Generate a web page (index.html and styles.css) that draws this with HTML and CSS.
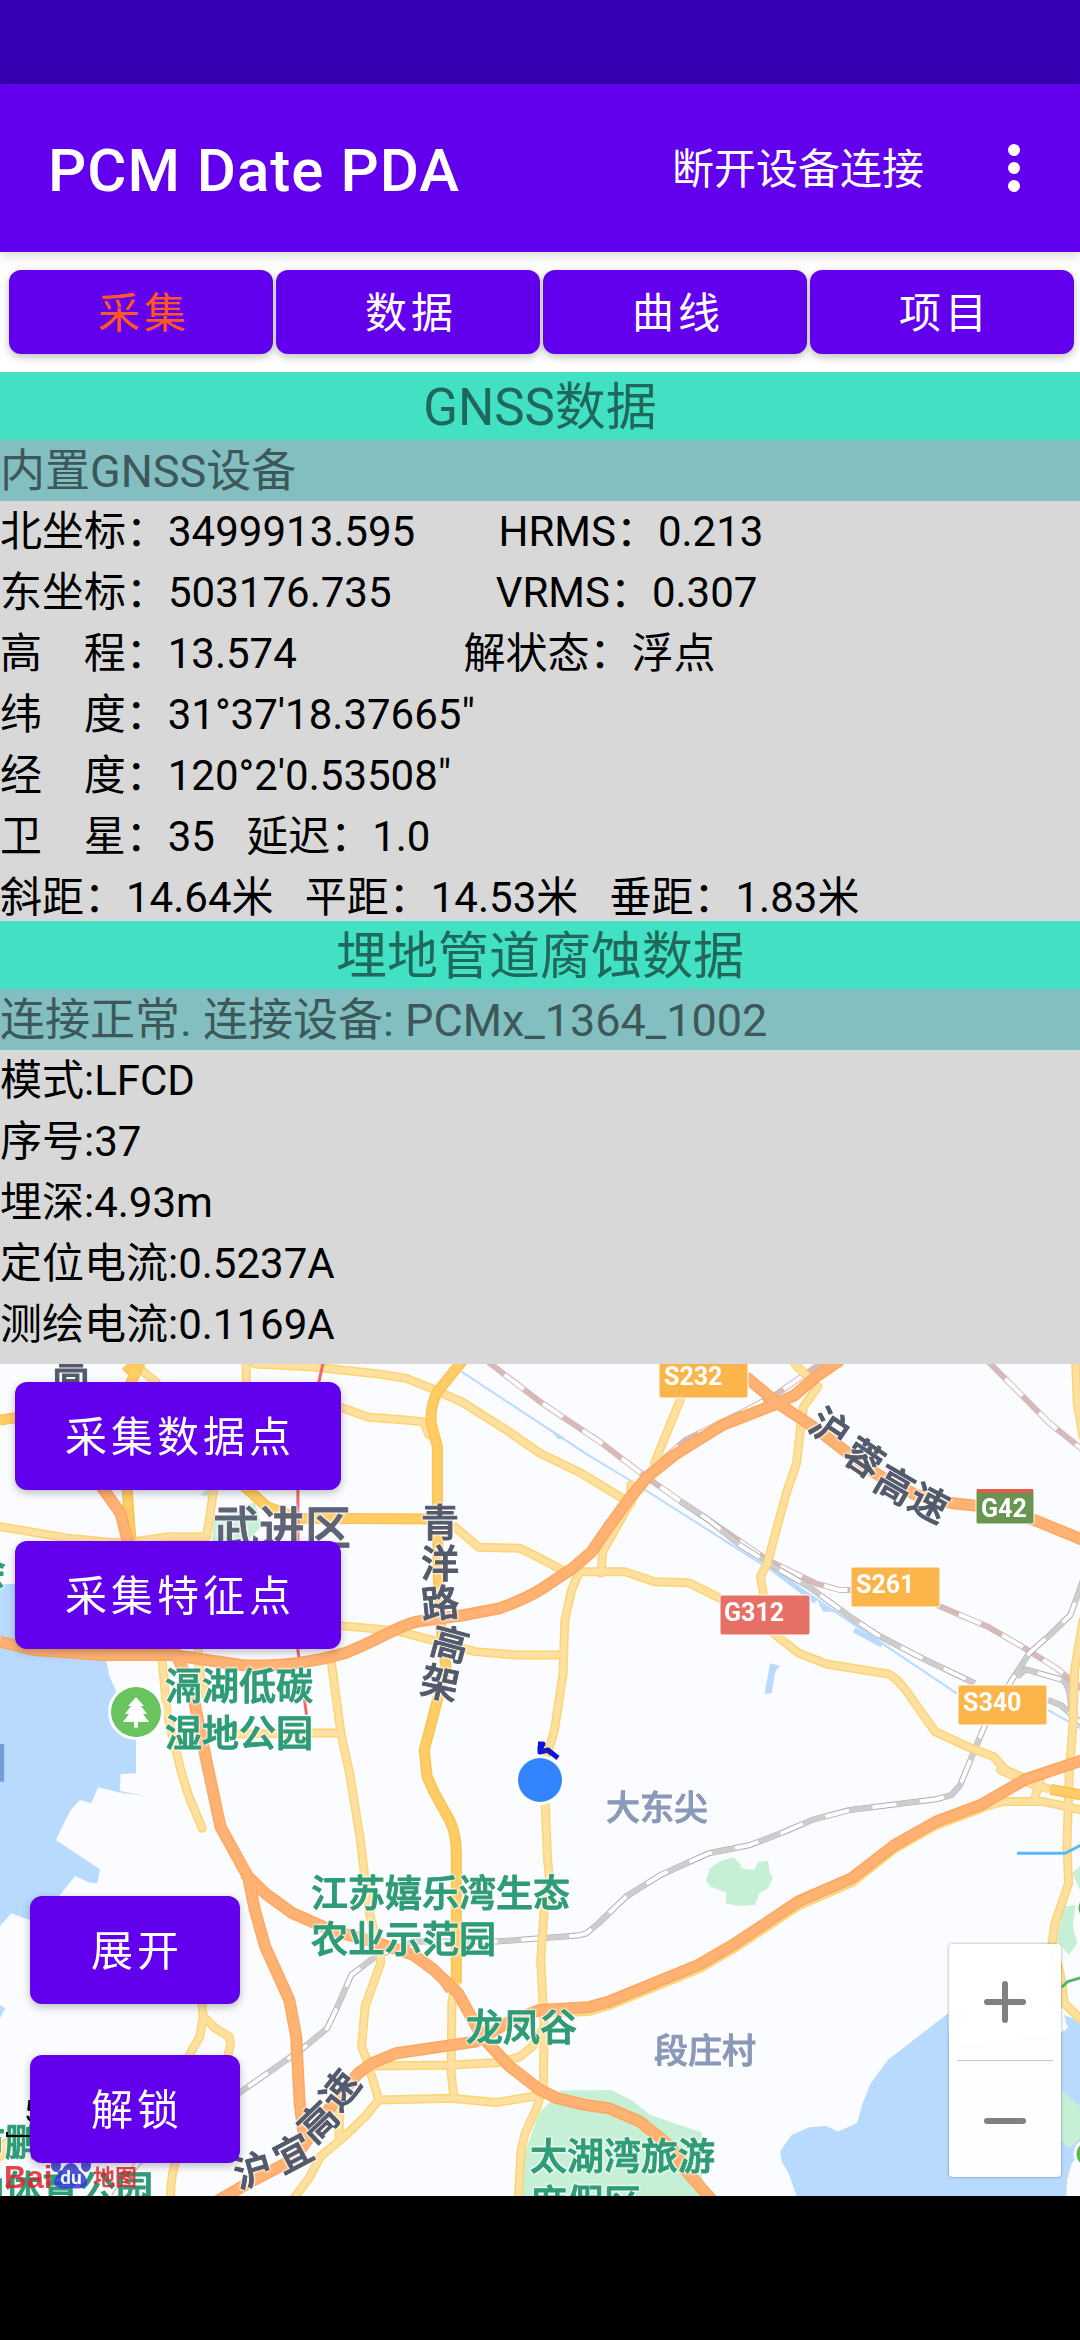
FILE: index.html
```html
<!DOCTYPE html>
<html lang="zh-CN">
<head>
<meta charset="utf-8">
<meta name="viewport" content="width=device-width, initial-scale=1">
<title>PCM Date PDA</title>
<link rel="stylesheet" href="styles.css">
</head>
<body>
<div class="status-bar"></div>
<header class="app-bar">
  <h1 class="app-title">PCM Date PDA</h1>
  <button class="bar-action" type="button">断开设备连接</button>
  <button class="bar-more" type="button" aria-label="更多">
    <svg width="12" height="48" viewBox="0 0 12 48"><circle cx="6" cy="6" r="6"/><circle cx="6" cy="24" r="6"/><circle cx="6" cy="42" r="6"/></svg>
  </button>
</header>
<nav class="tabs">
  <button class="btn tab tab-active" type="button">采集</button>
  <button class="btn tab" type="button">数据</button>
  <button class="btn tab" type="button">曲线</button>
  <button class="btn tab" type="button">项目</button>
</nav>
<main class="content">
  <section class="panel">
    <h2 class="panel-title">GNSS数据</h2>
    <p class="panel-device">内置GNSS设备</p>
    <ul class="readings readings-tight">
      <li>北坐标：3499913.595        HRMS：0.213</li>
      <li>东坐标：503176.735          VRMS：0.307</li>
      <li>高    程：13.574                解状态：浮点</li>
      <li>纬    度：31°37'18.37665"</li>
      <li>经    度：120°2'0.53508"</li>
      <li>卫    星：35   延迟：1.0</li>
      <li>斜距：14.64米   平距：14.53米   垂距：1.83米</li>
    </ul>
  </section>
  <section class="panel">
    <h2 class="panel-title">埋地管道腐蚀数据</h2>
    <p class="panel-device">连接正常. 连接设备: PCMx_1364_1002</p>
    <ul class="readings readings-loose">
      <li>模式:LFCD</li>
      <li>序号:37</li>
      <li>埋深:4.93m</li>
      <li>定位电流:0.5237A</li>
      <li>测绘电流:0.1169A</li>
    </ul>
  </section>
  <section class="map" aria-label="地图">
    <svg class="map-canvas" viewBox="0 0 1080 832" preserveAspectRatio="xMidYMid slice">
      <defs>
        <g id="roads-light">
          <path d="M715 0V70L700 200M620 390L612 450 600 530 490 530 390 545M0 500L70 512 200 535 330 548 390 545M740 12L900 20 1100 42 1180 55 1240 80 1340 125 1470 210 1568 280 1688 340 1808 415M410 30L455 68M985 140L1070 172 1150 178 1230 185 1245 225"/>
          <path d="M1320 500L1390 562 1510 565 1568 595 1640 635H1815L1900 665 2000 668 2090 715 2200 780 2270 840 2320 880 2400 912 2580 942Q2610 960 2640 1005L2715 1115 2820 1165 2885 1190 2920 1230 2990 1262"/>
          <path d="M985 797L1150 812 1270 845 1380 875 1500 885H1635M1680 640L1660 690 1640 780 1635 940 1610 1110 1590 1180M1583 1330L1590 1500 1595 1550 1580 1650 1570 1800 1575 1900 1580 2000 1578 2170 1560 2240 1525 2320 1513 2370 1505 2520"/>
          <path d="M1975 120L1900 310M1845 400L1750 575 1745 640M1832 375V430M2308 12L2345 50M2375 80L2333 140 2325 200 2313 310 2283 400 2228 610 2208 650 2218 710"/>
          <path d="M3123 0L3128 130 3145 230M3145 780L3120 930 3115 1100 3105 1230 3098 1460 3103 1570 3063 1690 3055 1750 3080 1850 3090 1930 3140 1980M2905 1230L2990 1270 3040 1285M2840 1345L2910 1325 3030 1325 3140 1350M3020 1260L3003 1320"/>
          <path d="M470 890L485 1060 525 1230 545 1300 587 1405M575 860L580 940 600 1010M960 890L990 1120 1015 1240 1045 1430 1065 1600 1075 1670 1105 1780V1810L1060 1940 1050 2060 1065 2100 1100 2220M680 1122L980 1118"/>
          <path d="M585 1920L590 1970 580 2030 545 2095M590 1970L625 2005 665 2030 670 2050 660 2095M1080 2118L1310 2115 1450 2108 1510 2090 1545 2060 1575 2010M1100 2220L1310 2215 1440 2228 1575 2205M1100 2220L1060 2270 1000 2330 930 2390 900 2450 850 2520M985 2250V2330M515 2390Q495 2440 495 2520M0 2390L15 2350 60 2320M1325 1850L1312 1930 1310 2140 1318 2215"/>
          <path d="M1590 1960L1708 1955 1770 1936 2030 1827 2130 1767 2320 1637 2475 1567 2600 1465 2720 1395 2850 1345"/>
        </g>
        <g id="roads-main">
          <path d="M1345 0L1270 95Q1248 140 1252 190L1270 260V400L1272 640 1280 800 1295 920 1265 1040 1232 1170 1240 1250 1262 1300 1305 1380Q1325 1420 1325 1480V1870M700 370L775 440 870 475 1270 477M410 0L375 80 372 200 370 400 380 540M0 180L100 165M365 15L400 50M3050 1288L3140 1305"/>
        </g>
        <g id="roads-express">
          <path d="M0 845L100 870 300 885 500 885 700 915Q850 925 1000 880C1100 840 1150 800 1210 785L1350 765 1450 745Q1520 720 1568 690L1663 625 1718 575 1768 500 1828 415 1880 350 1958 285 2098 195 2258 130 2308 105 2370 50 2440 0"/>
          <path d="M2165 50L2258 130 2368 205 2450 270 2550 345 2660 405 2768 430 2833 437 3003 480 3145 540M295 380L350 460 375 560M505 870L555 980 605 1230 640 1400 720 1550 740 1650 770 1760 840 1920 860 2030 870 2230 880 2310 895 2345"/>
          <path d="M710 1540L770 1600 850 1660 960 1710 1100 1750 1200 1785 1260 1830 1330 1900 1400 2030 1480 2120 1568 2190 1618 2215 1698 2235 1768 2245 1858 2285 1948 2360 1990 2430 2075 2530"/>
          <path d="M620 2530L720 2470 850 2400 900 2330 960 2240 1040 2140 1080 2110 1150 2080 1380 2045 1480 1985 1568 1950 1708 1942 1768 1925 2028 1815 2128 1755 2318 1625 2473 1555 2598 1455 2718 1385 2848 1335 2978 1258 3145 1200"/>
          <path d="M1290 1860L1310 1890"/>
        </g>
        <g id="rail-pink">
          <path d="M1410 0L1568 125 1748 250 1868 345 1978 425 2108 515 2228 600 2368 670 2438 690H2480M2720 735L2868 800 2968 860 3068 925 3145 990M2390 5L2258 100 2168 150 1990 240 1900 320M2870 5L3048 190 3145 270"/>
        </g>
        <g id="rail-grey">
          <path d="M1978 425L2058 480 2148 555 2248 620 2348 680 2468 770 2548 825 2668 890 2830 970M3043 1020L3080 1035 3145 1095M3145 660L3108 765 3048 825 2988 880 2938 960 2858 1100 2798 1250 2788 1275 2763 1305 2718 1318 2468 1350 2358 1380 2268 1420 2178 1455 2058 1480 1918 1545 1818 1610 1738 1690 1703 1720 1678 1727 1568 1735 1440 1745 1200 1745 1090 1790 1020 1845 980 1940 950 2005 880 2065 700 2195 400 2410 330 2510M2953 950L2978 928 3085 960Q3110 980 3110 1060"/>
        </g>
      </defs>
      <rect class="land" width="1080" height="832"/>
      <g class="terrain" transform="translate(0 -4) scale(.3444 .3333)">
        <path class="water" d="M0 672H100V870L308 900 318 950 340 1000 395 1050V1240L350 1242 348 1293 432 1310 348 1298 285 1282 265 1330 232 1320 205 1350 162 1440 290 1528 282 1570 260 1568 218 1548 172 1608 85 1680 33 1660 0 1698ZM0 1935L15 1945 0 1975Z"/>
        <path class="water" d="M2753 1960L2578 2100 2528 2170 2505 2230 2488 2290 2433 2315 2398 2298 2350 2302 2298 2325 2265 2375 2270 2405 2290 2440 2320 2530H3096L3098 2460 3112 2410 3140 2380V1985L3090 1965 3098 2000 3080 2020 2756 2060Z"/>
        <path class="water" d="M2236 910L2265 918 2251 935 2241 998 2220 1003ZM1595 205L1640 235 1620 238ZM2375 725L2420 755 2390 755Z"/>
        <path class="stream" d="M1340 35L1568 190 1700 280 1828 360 2208 610 2368 715 2518 820 2778 1000M3043 1050L3145 1110"/>
        <path class="stream stream-wide" d="M2240 625L2368 725M2480 810L2560 855"/>
        <path class="park" d="M2130 1492L2152 1515 2150 1525 2190 1530 2202 1505 2230 1503 2235 1540 2245 1552 2230 1585 2205 1600 2192 1635 2140 1638 2108 1630V1598L2062 1580 2050 1560 2062 1525 2090 1505Z"/>
        <path class="park" d="M1510 2530L1520 2390 1565 2260 1628 2192 1775 2190 1840 2225 1888 2265 2038 2318V2450L2070 2530ZM3145 1510L3113 1540 3136 1590ZM3088 1640L3123 1635 3115 1700 3128 1750 3103 1785 3068 1740ZM3080 2190L3140 2240V2330L3105 2365 3080 2340ZM580 405L605 385V410ZM620 480L740 425 760 500 700 560H615Z"/>
        <path class="islet" d="M3087 1985L3102 2000 3090 2015ZM3120 2100L3140 2110"/>
        <use href="#rail-pink" class="rail pink-edge"/><use href="#rail-pink" class="rail rail-gap"/><use href="#rail-pink" class="rail pink-dash"/>
        <use href="#rail-grey" class="rail grey-edge"/><use href="#rail-grey" class="rail rail-gap"/><use href="#rail-grey" class="rail grey-dash"/>
        <use href="#roads-light" class="light-edge"/><use href="#roads-light" class="light-fill"/>
        <use href="#roads-main" class="main-edge"/><use href="#roads-main" class="main-fill"/>
        <path class="metro" d="M940 0L925 70 865 390V870L890 1065"/>
        <use href="#roads-express" class="express-edge"/><use href="#roads-express" class="express-fill"/>
        <path class="metro-blue" d="M2953 1480H3093L3140 1455"/>
        <path class="metro-green" d="M3083 1882L3100 1865 3140 1853"/>
        <path class="sign" d="M0 1152H12V1265H0Z"/>
      </g>

      <g class="road-name">
        <text x="71" y="18">高</text>
        <text x="440" y="172">青</text>
        <text x="440" y="213">洋</text>
        <text x="440" y="253" transform="rotate(-6 440 239)">路</text>
        <text x="450" y="294" transform="rotate(15 450 280)">高</text>
        <text x="440" y="333" transform="rotate(12 440 319)">架</text>
        <text x="830" y="78" transform="rotate(34 830 64)">沪</text>
        <text x="864" y="108" transform="rotate(34 864 94)">蓉</text>
        <text x="895" y="135" transform="rotate(30 895 121)">高</text>
        <text x="929" y="153" transform="rotate(28 929 139)">速</text>
        <text x="253" y="820" transform="rotate(-16 253 806)">沪</text>
        <text x="293" y="803" transform="rotate(-28 293 789)">宜</text>
        <text x="318" y="772" transform="rotate(-44 318 758)">高</text>
        <text x="340" y="740" transform="rotate(-52 340 726)">速</text>
      </g>
      <text class="district" x="213" y="180">武进区</text>
      <g class="place">
        <text x="-31" y="221">会</text>
        <text x="165" y="336">滆湖低碳</text>
        <text x="165" y="383">湿地公园</text>
        <text x="311" y="543">江苏嬉乐湾生态</text>
        <text x="311" y="589">农业示范园</text>
        <text x="466" y="677">龙凤谷</text>
        <text x="530" y="806">太湖湾旅游</text>
        <text x="530" y="853">度假区</text>
        <text x="-32" y="792">市鹏</text>
        <text x="-32" y="839">山体育公园</text>
      </g>
      <g class="village">
        <text x="606" y="456">大东尖</text>
        <text x="654" y="699">段庄村</text>
      </g>
      <g class="shield">
        <rect class="shield-s" x="659" y="-6" width="89" height="40" rx="2"/><text x="664" y="21">S232</text>
        <rect class="shield-g" x="720" y="231" width="90" height="40" rx="2"/><text x="724" y="257">G312</text>
        <rect class="shield-s" x="851" y="203" width="89" height="40" rx="2"/><text x="856" y="229">S261</text>
        <rect class="shield-s" x="958" y="321" width="89" height="40" rx="2"/><text x="963" y="347">S340</text>
        <rect class="shield-e" x="976" y="125" width="58" height="35" rx="2"/><path class="shield-top" d="M977 125H1033V129H977Z"/><text x="981" y="153">G42</text>
      </g>
      <g>
        <circle cx="136" cy="348" r="28" fill="#fff"/><circle cx="136" cy="348" r="25" fill="#69c35f"/>
        <path d="M136 333L144 342H141L147 350H143L149 358H138V363Q136 365 134 363V358H123L129 350H125L131 342H128Z" fill="#fff"/>
        <circle cx="1089" cy="790" r="14" fill="#5db554" stroke="#fff" stroke-width="3"/>
        <circle cx="1090" cy="544" r="13" fill="#5db554" stroke="#fff" stroke-width="3"/>
      </g>
      <g>
        <path d="M538 380H543L541 384M540 382V388L548 386 558 394" fill="none" stroke="#1010e0" stroke-width="5" stroke-linejoin="round"/>
        <path d="M541 386L546 387 551 391" fill="none" stroke="#23238c" stroke-width="2"/>
        <circle cx="540" cy="416" r="25" fill="#fff"/><circle cx="540" cy="416" r="22" fill="#3385ff"/>
      </g>
      <g>
        <text class="scale-label" x="24" y="758">5公里</text>
        <path d="M7 768V772H120V768" fill="none" stroke="#000" stroke-width="2"/>
        <g class="brand">
          <text class="brand-latin" x="4" y="824">Bai</text>
          <g fill="#3138d8"><ellipse cx="56" cy="801" rx="5" ry="7"/><ellipse cx="65" cy="792" rx="5" ry="7"/><ellipse cx="77" cy="792" rx="5" ry="7"/><ellipse cx="86" cy="801" rx="5" ry="7"/><path d="M71 799Q76 799 79 806Q88 813 87 820Q84 826 71 824Q58 826 54 820Q54 812 62 806Q66 799 71 799Z"/></g>
          <text class="brand-du" x="71" y="820">du</text>
          <text class="brand-cjk" x="93" y="821">地图</text>
        </g>
      </g>
    </svg>
    <div class="map-actions">
      <button class="btn map-btn" type="button">采集数据点</button>
      <button class="btn map-btn" type="button">采集特征点</button>
    </div>
    <div class="map-tools">
      <button class="btn map-btn" type="button">展开</button>
      <button class="btn map-btn" type="button">解锁</button>
    </div>
    <div class="zoom">
      <button class="zoom-btn" type="button" aria-label="放大"><svg width="44" height="44" viewBox="0 0 44 44"><path d="M4 22H40M22 4V40"/></svg></button>
      <button class="zoom-btn" type="button" aria-label="缩小"><svg width="44" height="44" viewBox="0 0 44 44"><path d="M4 22H40"/></svg></button>
    </div>
  </section>
</main>
<div class="nav-bar"></div>
</body>
</html>
```
FILE: styles.css
```css
* {
  box-sizing: border-box;
}

body {
  margin: 0;
  min-height: 100vh;
  display: flex;
  flex-direction: column;
  background: #fff;
  color: #000;
  font-family: Roboto, "Noto Sans CJK SC", sans-serif;
  font-size: 42px;
}

button {
  border: 0;
  margin: 0;
  padding: 0;
  background: none;
  color: inherit;
  font: inherit;
}

.status-bar {
  height: 84px;
  background: #3700b3;
}

.app-bar {
  position: relative;
  display: flex;
  align-items: center;
  height: 168px;
  padding: 0 48px;
  background: #6200ee;
  color: #fff;
  box-shadow: 0 2px 12px rgba(0, 0, 0, 0.2);
}

.app-title {
  flex: 1;
  margin: 0;
  padding-top: 4px;
  font-size: 60px;
  font-weight: 500;
  letter-spacing: 1px;
}

.bar-action {
  padding-bottom: 6px;
}

.bar-more {
  display: flex;
  justify-content: center;
  width: 48px;
  margin-left: 66px;
  margin-right: -6px;
}

.bar-more svg {
  fill: #fff;
}

.btn {
  border-radius: 12px;
  background: #6200ee;
  color: #fff;
  letter-spacing: 4px;
  line-height: 60px;
  box-shadow: 0 3px 8px rgba(0, 0, 0, 0.26);
}

.tabs {
  display: grid;
  grid-template-columns: repeat(4, 1fr);
  gap: 3px;
  padding: 18px 6px 18px 9px;
}

.tab {
  height: 84px;
  padding: 3px 0 0 6px;
}

.tab-active {
  color: #ff5722;
}

.content {
  flex: 1;
  display: flex;
  flex-direction: column;
}

.panel {
  background: #d8d8d8;
}

.panel-title {
  margin: 0;
  padding-top: 4px;
  background: #43e1c4;
  color: #1f685a;
  font-size: 51px;
  font-weight: 400;
  line-height: 64px;
  text-align: center;
}

.panel-device {
  margin: 0;
  padding-top: 3px;
  background: #83bfc0;
  color: #3c5858;
  font-size: 45px;
  line-height: 58px;
}

.readings {
  margin: 0;
  padding: 0;
  list-style: none;
  line-height: 61px;
}

.readings li {
  white-space: pre;
}

.readings-tight {
  margin-bottom: -7px;
}

.readings-loose {
  padding-bottom: 9px;
}

.map {
  position: relative;
  flex: 1;
  min-height: 832px;
  overflow: hidden;
}

.map-canvas {
  position: absolute;
  inset: 0;
  width: 100%;
  height: 100%;
}

.map-actions,
.map-tools {
  position: absolute;
  display: flex;
  flex-direction: column;
  gap: 51px;
}

.map-actions {
  top: 18px;
  left: 15px;
}

.map-tools {
  bottom: 33px;
  left: 30px;
}

.map-btn {
  height: 108px;
  min-width: 210px;
  padding: 3px 46px 0 50px;
}

.zoom {
  position: absolute;
  right: 19px;
  bottom: 19px;
  width: 112px;
  padding: 0 8px;
  border-radius: 4px;
  background: rgba(255, 255, 255, 0.95);
  box-shadow: 0 0 3px rgba(0, 0, 0, 0.4);
}

.zoom-btn {
  display: flex;
  align-items: center;
  justify-content: center;
  width: 100%;
  height: 116px;
}

.zoom-btn + .zoom-btn {
  height: 117px;
  padding-top: 3px;
  border-top: 1px solid #c8c8c8;
}

.zoom-btn svg {
  fill: none;
  stroke: #808080;
  stroke-width: 6px;
  stroke-linecap: round;
}

.nav-bar {
  height: 144px;
  background: #000;
}

/* Map layers */
.land { fill: #fbfcff; }
.water { fill: #b8daff; }
.park { fill: #c6f0d6; }
.islet { fill: #fbfcff; }
.sign { fill: #6f9fd6; }

.terrain path,
.map-canvas defs path {
  vector-effect: non-scaling-stroke;
}

.terrain use,
.stream,
.metro,
.metro-blue,
.metro-green {
  fill: none;
  stroke-linejoin: round;
}

.stream { stroke: #b8daff; stroke-width: 2px; }
.stream-wide { stroke-width: 5px; }
.light-edge { stroke: #fdd570; stroke-width: 9px; stroke-linecap: round; }
.light-fill { stroke: #ffe0a0; stroke-width: 6px; stroke-linecap: round; }
.main-edge { stroke: #ffc24c; stroke-width: 11px; }
.main-fill { stroke: #ffcc66; stroke-width: 8px; }
.express-edge { stroke: #ffa760; stroke-width: 12px; }
.express-fill { stroke: #ffb272; stroke-width: 9px; }
.pink-edge { stroke: #d6baba; stroke-width: 6px; }
.grey-edge { stroke: #adadad; stroke-width: 6px; }
.rail-gap { stroke: #fff; stroke-width: 4px; }
.pink-dash { stroke: #d6baba; stroke-width: 5px; stroke-dasharray: 24px; }
.grey-dash { stroke: #cdcdcd; stroke-width: 5px; stroke-dasharray: 24px; }
.metro { stroke: #f2686a; stroke-width: 3px; }
.metro-blue { stroke: #55b9fa; stroke-width: 3px; }
.metro-green { stroke: #4fb873; stroke-width: 3px; }

.road-name,
.district,
.place,
.village {
  font-family: "Noto Sans CJK SC", sans-serif;
  font-weight: 500;
  stroke-width: 1px;
  stroke-linejoin: round;
  filter: drop-shadow(0 0 1px #fff) drop-shadow(0 0 1px #fff);
}

.road-name { fill: #525a6c; stroke: #525a6c; font-size: 38px; text-anchor: middle; }
.district { fill: #5c6476; stroke: #5c6476; font-size: 46px; }
.place { fill: #2e9c77; stroke: #2e9c77; font-size: 37px; }
.village { fill: #8a99b9; stroke: #8a99b9; font-size: 34px; }

.shield {
  fill: #fff;
  font-size: 25px;
  font-weight: 700;
}

.shield rect { stroke: #fff; stroke-width: 1px; }
.shield-s { fill: #fbb54b; }
.shield-g { fill: #e77066; }
.shield-e { fill: #68954f; }
.shield-top { fill: #e25b4e; }

.scale-label { font-size: 32px; }
.brand { opacity: 0.85; font-weight: 700; }
.brand-latin { fill: #e0242b; font-family: "Liberation Sans", sans-serif; font-size: 31px; }
.brand-du { fill: #fff; font-size: 19px; text-anchor: middle; }
.brand-cjk { fill: #e0242b; font-size: 22px; }
```
